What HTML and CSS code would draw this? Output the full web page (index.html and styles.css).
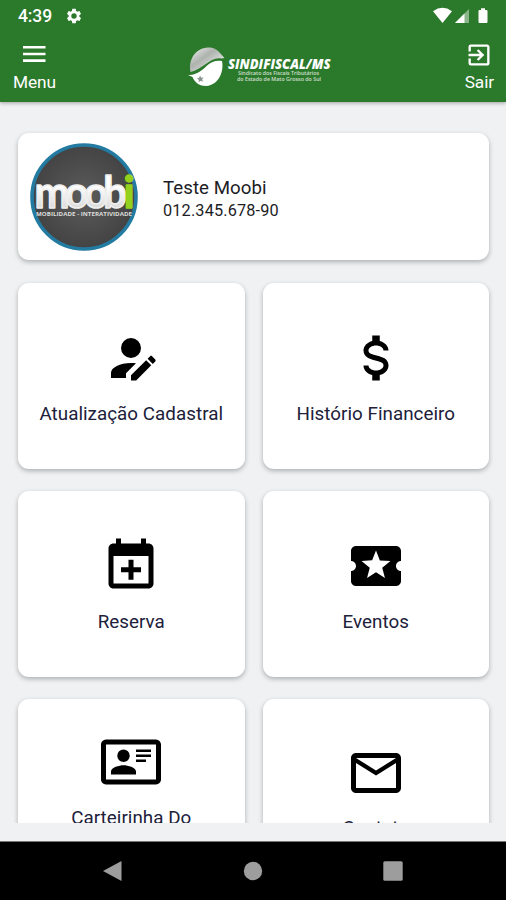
FILE: index.html
```html
<!DOCTYPE html>
<html lang="pt-BR">
<head>
<meta charset="utf-8">
<title>Sindifiscal/MS</title>
<link rel="stylesheet" href="styles.css">
</head>
<body>
<div class="screen">
  <header class="header">
    <div class="status">
      <span class="clock">4:39</span>
      <svg class="gear" viewBox="0 0 24 24"><path d="M19.14 12.94c.04-.3.06-.61.06-.94s-.02-.64-.07-.94l2.03-1.58a.49.49 0 0 0 .12-.61l-1.92-3.32a.49.49 0 0 0-.59-.22l-2.39.96a7 7 0 0 0-1.62-.94l-.36-2.54A.48.48 0 0 0 13.92 2.400h-3.840a.48.48 0 0 0-.47.41l-.36 2.540a7.300 7.300 0 0 0-1.620.940l-2.390-.960a.48.48 0 0 0-.590.220L2.740 8.870a.48.48 0 0 0 .120.610l2.030 1.580a6.500 6.500 0 0 0 0 1.880l-2.030 1.580a.49.49 0 0 0-.120.610l1.920 3.320c.120.220.370.290.590.220l2.390-.960c.5.380 1.030.7 1.620.940l.36 2.540c.050.240.240.410.480.410h3.840c.240 0 .440-.170.470-.410l.36-2.540a7 7 0 0 0 1.620-.940l2.390.960c.220.080.470 0 .590-.220l1.920-3.320a.48.48 0 0 0-.120-.610zM12 15.600a3.600 3.600 0 1 1 0-7.200 3.600 3.600 0 0 1 0 7.200z"/></svg>
      <svg class="signals" viewBox="0 0 58 18">
        <path d="M0 4.200Q9.500-2.500 19 4.200L9.500 16z"/>
        <path d="M22 16L36 2v14z" opacity=".45"/><path d="M22 16l9.500-9.500V16z"/>
        <path d="M48 1.200h4V3h1.500q1 0 1 1v11q0 1-1 1h-7q-1 0-1-1V4q0-1 1-1H48z"/>
      </svg>
    </div>
    <nav class="toolbar">
      <div class="action">
        <svg class="action-icon" viewBox="0 0 28 28"><path d="M3 5h22.500v2.600H3zM3 11.700h22.500v2.600H3zM3 18.300h22.500v2.600H3z"/></svg>
        <span>Menu</span>
      </div>
      <svg class="brand" viewBox="0 0 146 44">
        <defs><linearGradient id="globe" x1="0" y1="0" x2="1" y2="1"><stop offset="0" stop-color="#f2f2f2"/><stop offset=".4" stop-color="#aeb3ae"/><stop offset="1" stop-color="#fff"/></linearGradient></defs>
        <path d="M3.500 27C1 14 9 3 21 2.500c6 0 9 2 12 5.500l4.500 5-3 .5C24 11 16 24 3.500 27z" fill="url(#globe)"/>
        <path d="M1 30c4 .5 9-1 14-5s10-11 20-9c2 9-2 24-16 25-8 0-12-5-13.500-9z" fill="#fff"/>
        <path d="M13 30.500l1.200 2.200 2.400-.3-1.500 2 1 2.300-2.400-.9-2 1.500.1-2.500-2-1.400 2.400-.6z" fill="#8a918a"/>
        <text class="brand-name" x="41" y="23.500" textLength="102.500" lengthAdjust="spacingAndGlyphs">SINDIFISCAL/MS</text>
        <text class="brand-sub" x="51" y="29.700" textLength="81" lengthAdjust="spacingAndGlyphs">Sindicato dos Fiscais Tributários</text>
        <text class="brand-sub" x="50" y="35.500" textLength="84" lengthAdjust="spacingAndGlyphs">do Estado de Mato Grosso do Sul</text>
      </svg>
      <div class="action">
        <svg class="action-icon" viewBox="0 0 24 24"><path d="M10.090 15.590L11.500 17l5-5-5-5-1.410 1.410L12.670 11H3v2h9.670l-2.580 2.590zM19 3H5a2 2 0 0 0-2 2v4h2V5h14v14H5v-4H3v4a2 2 0 0 0 2 2h14c1.100 0 2-.9 2-2V5c0-1.100-.9-2-2-2z"/></svg>
        <span>Sair</span>
      </div>
    </nav>
  </header>

  <main class="content">
    <section class="card profile">
      <svg class="avatar" viewBox="0 0 108 108">
        <defs>
          <radialGradient id="disc"><stop offset="0" stop-color="#5c5c5c"/><stop offset="1" stop-color="#434343"/></radialGradient>
          <linearGradient id="letters" x1="0" y1="0" x2="0" y2="1"><stop offset=".4" stop-color="#fff"/><stop offset="1" stop-color="#ccc"/></linearGradient>
        </defs>
        <circle cx="54" cy="54" r="52" fill="url(#disc)" stroke="#247ba1" stroke-width="3.600"/>
        <g transform="translate(4.500 65) scale(.95 1)"><text class="moobi" fill="url(#letters)" stroke="#eee">moob</text></g>
        <text class="moobi" x="93.500" y="65" fill="#93d11c" stroke="#93d11c">i</text>
        <text class="moobi-sub" x="6" y="72.500" textLength="96" lengthAdjust="spacingAndGlyphs">MOBILIDADE - INTERATIVIDADE</text>
      </svg>
      <div class="who">
        <span class="name">Teste Moobi</span>
        <span class="cpf">012.345.678-90</span>
      </div>
    </section>

    <section class="grid">
      <div class="card tile">
        <svg viewBox="0 0 24 24"><path d="M21.700 13.350l-1 1-2.050-2.050 1-1c.21-.21.56-.21.77 0l1.280 1.280c.21.21.21.56 0 .77M12 18.940l6.060-6.060 2.050 2.050L14.060 21H12v-2.060M12 14c-4.420 0-8 1.790-8 4v2h6v-1.890l4-4c-.66-.08-1.330-.11-2-.11M12 4a4 4 0 1 0 0 8 4 4 0 0 0 0-8z"/></svg>
        <span>Atualização Cadastral</span>
      </div>
      <div class="card tile">
        <svg viewBox="0 0 24 24"><path d="M7,15H9C9,16.080 10.370,17 12,17C13.630,17 15,16.080 15,15C15,13.900 13.960,13.500 11.760,12.970C9.640,12.440 7,11.780 7,9C7,7.210 8.470,5.690 10.500,5.180V3H13.500V5.180C15.530,5.690 17,7.210 17,9H15C15,7.920 13.630,7 12,7C10.370,7 9,7.920 9,9C9,10.100 10.040,10.500 12.240,11.030C14.360,11.560 17,12.220 17,15C17,16.790 15.530,18.310 13.500,18.820V21H10.500V18.820C8.470,18.310 7,16.790 7,15Z"/></svg>
        <span>Histório Financeiro</span>
      </div>
      <div class="card tile">
        <svg viewBox="0 0 24 24"><path d="M19 19V8H5V19H19M16 1H18V3H19C20.110 3 21 3.900 21 5V19C21 20.110 20.110 21 19 21H5C3.890 21 3 20.100 3 19V5C3 3.890 3.890 3 5 3H6V1H8V3H16V1M11 9.500H13V12.500H16V14.500H13V17.500H11V14.500H8V12.500H11V9.500Z"/></svg>
        <span>Reserva</span>
      </div>
      <div class="card tile">
        <svg viewBox="0 0 24 24"><path d="M20 12c0-1.100.9-2 2-2V6c0-1.100-.9-2-2-2H4c-1.100 0-2 .9-2 2v4c1.100 0 2 .9 2 2s-.9 2-2 2v4c0 1.100.9 2 2 2h16c1.100 0 2-.9 2-2v-4c-1.100 0-2-.9-2-2zm-4.420 4.800L12 14.500l-3.580 2.300 1.080-4.120-3.290-2.690 4.240-.25L12 5.800l1.540 3.950 4.240.25-3.290 2.690 1.090 4.110z"/></svg>
        <span>Eventos</span>
      </div>
      <div class="card tile">
        <svg viewBox="0 0 24 24"><path d="M22,3H2C0.910,3.040 0.040,3.910 0,5V19C0.040,20.090 0.910,20.960 2,21H22C23.090,20.960 23.960,20.090 24,19V5C23.960,3.910 23.090,3.040 22,3M22,19H2V5H22V19M14,17V15.750C14,14.090 10.660,13.250 9,13.250C7.340,13.250 4,14.090 4,15.750V17H14M9,7A2.500,2.500 0 0,0 6.500,9.500A2.500,2.500 0 0,0 9,12A2.500,2.500 0 0,0 11.500,9.500A2.500,2.500 0 0,0 9,7M14,7V8H20V7H14M14,9V10H20V9H14M14,11V12H18V11H14"/></svg>
        <span>Carteirinha Do<br>&nbsp;</span>
      </div>
      <div class="card tile tile-contact">
        <svg viewBox="0 0 24 24"><path d="M22 6C22 4.900 21.100 4 20 4H4C2.900 4 2 4.900 2 6V18C2 19.100 2.900 20 4 20H20C21.100 20 22 19.100 22 18V6M20 6L12 11L4 6H20M20 18H4V8L12 13L20 8V18Z"/></svg>
        <span>Contato</span>
      </div>
    </section>
  </main>

  <footer class="system-nav">
    <svg viewBox="0 0 20 20"><path d="M18.500 0v20L0 10z"/></svg>
    <svg viewBox="0 0 20 20"><circle cx="10" cy="10" r="9.200"/></svg>
    <svg viewBox="0 0 20 20"><rect x=".3" y=".3" width="19.400" height="19.400" rx="1.500"/></svg>
  </footer>
</div>
</body>
</html>
```
FILE: styles.css
```css
* { box-sizing: border-box; }
body { margin: 0; background: #eff1f3; font-family: Roboto, "Liberation Sans", sans-serif; }
svg { display: block; flex: none; }
.screen { width: 506px; height: 900px; display: flex; flex-direction: column; overflow: hidden; background: #eff1f3; }

.header { height: 102px; flex: none; background: #2b792b; color: #fff; fill: #fff; box-shadow: 0 1px 4px rgba(0, 0, 0, .35); }
.status { height: 32px; display: flex; align-items: center; padding: 0 15px 0 18px; }
.clock { font-size: 17.5px; font-weight: 500; line-height: 32px; letter-spacing: -.1px; }
.gear { width: 18px; height: 18px; margin-left: 13px; }
.signals { width: 58px; height: 18px; margin-left: auto; }
.toolbar { display: flex; justify-content: space-between; padding: 8px 12px 0 13px; }
.action { display: flex; flex-direction: column; align-items: center; font-size: 17.3px; line-height: 22px; letter-spacing: -.1px; }
.action-icon { width: 28px; height: 28px; margin: 1px 0 2px; }
.brand { width: 146px; height: 44px; margin: 5px 0 0; overflow: visible; }
.brand-name { font: italic 800 13.5px "Open Sans", sans-serif; }
.brand-sub { font: 600 5px "Open Sans", sans-serif; opacity: .75; }

.content { height: 721px; flex: none; padding: 31px 17px 0 18px; overflow: hidden; }
.card { background: #fff; border-radius: 11px; box-shadow: 0 2px 5px rgba(0, 0, 0, .28); }
.profile { height: 127px; display: flex; align-items: center; padding-left: 12px; }
.avatar { width: 108px; height: 108px; }
.moobi { font: 700 44px Lato, sans-serif; letter-spacing: -5px; stroke-width: 1.5px; stroke-linejoin: round; }
.moobi-sub { font: 700 4.5px "Open Sans", sans-serif; fill: #ddd; }
.who { display: flex; flex-direction: column; margin-left: 25px; padding-top: 4px; color: #1d1d25; }
.name { font-size: 18.7px; line-height: 24px; letter-spacing: .05px; }
.cpf { font-size: 16.3px; line-height: 22px; letter-spacing: .15px; }
.grid { display: grid; grid-template-columns: 1fr 1fr; grid-auto-rows: 186px; gap: 22px 18px; margin-top: 23px; }
.tile { display: flex; flex-direction: column; align-items: center; justify-content: center; gap: 14px; color: #20203a; font-size: 18.8px; line-height: 23px; letter-spacing: .04px; text-align: center; }
.tile svg { width: 60px; height: 60px; fill: #000; }
.tile span { padding-top: 1px; margin-bottom: -1px; }
.tile-contact { padding-bottom: 2px; }
.tile-contact span { padding-top: 0; margin-bottom: 0; }

.system-nav { height: 59px; flex: none; margin-top: auto; display: flex; justify-content: space-between; align-items: center; padding: 0 103px; background: #000; border-top: 1px solid #777; fill: #9d9d9d; }
.system-nav svg { width: 20px; height: 20px; }
```
